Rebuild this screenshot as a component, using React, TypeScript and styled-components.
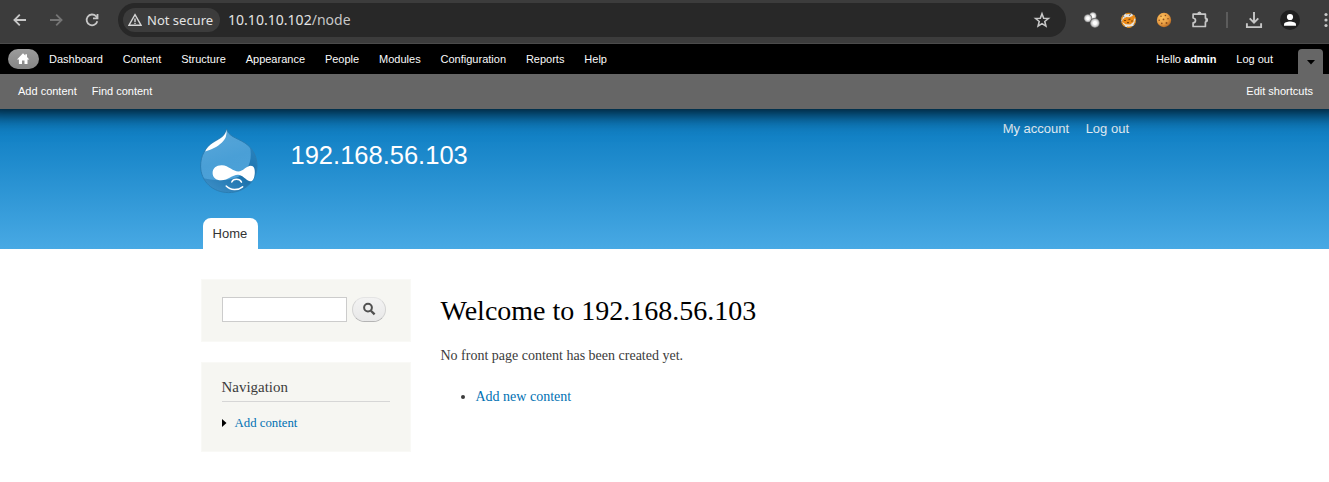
import React from "react";
import styled, { createGlobalStyle } from "styled-components";

const Global = createGlobalStyle`
  * { box-sizing: border-box; }
  html, body { margin: 0; padding: 0; background: #fff; overflow: hidden; }
  a { text-decoration: none; color: inherit; }
`;

const sans = `"Liberation Sans", Arial, sans-serif`;
const serif = `"Liberation Serif", "Times New Roman", serif`;

const Page = styled.div`
  width: 1329px;
  height: 482px;
  overflow: hidden;
`;

const BrowserBar = styled.div`
  position: relative;
  z-index: 2;
  height: 44px;
  padding: 0 0 4px 10px;
  display: flex;
  align-items: center;
  background: #3c3c3c;
  border-bottom: 1px solid #4b4b4b;
  font-family: "Noto Sans", sans-serif;
`;

const NavButtons = styled.div`
  display: flex;
  gap: 16px;
  width: 108px;
  flex: none;
  svg { display: block; }
`;

const AddressBar = styled.div`
  width: 948px;
  height: 34px;
  flex: none;
  margin-top: 1px;
  padding: 0 14px 0 5px;
  display: flex;
  align-items: center;
  border-radius: 17px;
  background: #282828;
`;

const SecurityChip = styled.div`
  width: 97px;
  height: 24px;
  padding-left: 5px;
  display: flex;
  align-items: center;
  gap: 5px;
  border-radius: 12px;
  background: #3c3c3c;
  color: #e3e3e3;
  font-size: 13px;
  line-height: 24px;
  white-space: nowrap;
`;

const Url = styled.div`
  flex: 1;
  margin-left: 8px;
  color: #e3e3e3;
  font-size: 14px;
  letter-spacing: 0.03px;
  line-height: 24px;
  span { color: #c7c7c7; }
`;

const Extensions = styled.div`
  display: flex;
  align-items: center;
  margin-left: 16px;
  flex: none;
  svg { display: block; flex: none; }
`;

const Slot = styled.div<{ $w: number }>`
  width: ${(p) => p.$w}px;
  height: 20px;
  flex: none;
  display: flex;
  align-items: center;
  justify-content: center;
`;

const Separator = styled.div`
  width: 2px;
  height: 16px;
  background: #5c5c5c;
`;

/* Bleeds past both window edges so that its shadow stays even across the page. */
const Toolbar = styled.div`
  position: relative;
  z-index: 1;
  margin: 0 -20px;
  box-shadow: 0 3px 20px #000;
  font: 11px/20px ${sans};
`;

const AdminMenu = styled.div`
  height: 30px;
  padding: 5px 26px 0 28px;
  display: flex;
  background: #000;
  color: #fafafa;
`;

const HomeLink = styled.a`
  width: 31px;
  height: 20px;
  display: flex;
  align-items: center;
  justify-content: center;
  border-radius: 10px;
  background: linear-gradient(#9c9c9c, #858585);
`;

const MenuItem = styled.a`
  padding: 0 9.96px;
`;

const Spacer = styled.div`
  flex: 1;
`;

const DrawerToggle = styled.a`
  width: 25px;
  height: 25px;
  margin-left: 15px;
  padding-top: 1px;
  display: flex;
  align-items: center;
  justify-content: center;
  border-radius: 4px 4px 0 0;
  background: #666;
`;

const Shortcuts = styled.div`
  height: 35px;
  padding: 7px 36px 0 38px;
  display: flex;
  gap: 15px;
  background: #666;
  color: #fefefe;
`;

const Header = styled.header`
  height: 140px;
  background: linear-gradient(#0779bf, #48a9e4);
`;

const HeaderInner = styled.div`
  height: 140px;
  margin: 0 200px;
  display: flex;
  flex-direction: column;
  justify-content: space-between;
`;

const Branding = styled.div`
  display: flex;
  padding-top: 12px;
`;

const Logo = styled.svg`
  margin-top: 7px;
  display: block;
`;

const SiteName = styled.div`
  flex: 1;
  margin: 19px 0 0 32.5px;
  color: #fffeff;
  font: 25.5px/30px ${sans};
`;

const UserMenu = styled.nav`
  display: flex;
  gap: 16.5px;
  color: #e6f1f8;
  font: 13px/16px ${sans};
`;

const HomeTab = styled.a`
  width: 55px;
  height: 31px;
  margin-left: 3px;
  padding-left: 9.6px;
  border-radius: 8px 8px 0 0;
  background: #fff;
  color: #333;
  font: 13px/32px ${sans};
`;

const Body = styled.div`
  display: flex;
  padding: 30px 0 0 200.5px;
  gap: 30px;
  font-family: ${serif};
`;

const Sidebar = styled.aside`
  width: 210px;
  display: flex;
  flex-direction: column;
  gap: 20px;
`;

const Block = styled.section<{ $h: number }>`
  height: ${(p) => p.$h}px;
  padding: 17px 20px 0;
  background: #f6f6f2;
  border: 1px solid #f9f9f6;
`;

const SearchRow = styled.div`
  display: flex;
  gap: 5px;
`;

const SearchField = styled.input`
  width: 125px;
  height: 25px;
  padding: 4px;
  border: 1px solid #ccc;
  border-radius: 0;
  background: #fff;
  outline: none;
`;

const SearchButton = styled.button`
  width: 34px;
  height: 25px;
  padding: 0 0 1px;
  display: flex;
  align-items: center;
  justify-content: center;
  border: 1px solid #e4e4e4;
  border-bottom-color: #b4b4b4;
  border-left-color: #d2d2d2;
  border-right-color: #d2d2d2;
  border-radius: 13px;
  background: linear-gradient(#f3f3f3, #e8e8e8);
`;

const BlockTitle = styled.h2`
  margin: 0;
  height: 22px;
  border-bottom: 1px solid #d6d6d6;
  color: #3b3b3b;
  font-weight: normal;
  font-size: 14.95px;
  line-height: 15px;
`;

const NavLink = styled.a`
  display: flex;
  align-items: center;
  gap: 8px;
  margin-top: 13px;
  color: #0071b3;
  font-size: 12.8px;
  line-height: 16px;
`;

const Content = styled.main`
  padding-top: 15px;
  color: #3b3b3b;
  font-size: 14px;
`;

const Title = styled.h1`
  margin: 0;
  color: #000;
  font-weight: normal;
  font-size: 28px;
  line-height: 34px;
`;

const Message = styled.p`
  margin: 17px 0 0;
  line-height: 21px;
`;

const ActionList = styled.ul`
  margin: 20px 0 0;
  padding-left: 35px;
  line-height: 21px;
  a { color: #0071b3; }
`;

const menu = ["Dashboard", "Content", "Structure", "Appearance", "People", "Modules", "Configuration", "Reports", "Help"];

const BackIcon = ({ color, flip }: { color: string; flip?: boolean }) => (
  <svg width="20" height="20" viewBox="0 0 20 20" fill="none" stroke={color} strokeWidth="1.8">
    <path d={flip ? "M4 10H15M10.2 4.6 15.6 10 10.2 15.4" : "M16 10H5M9.8 4.6 4.4 10 9.8 15.4"} />
  </svg>
);

const ReloadIcon = () => (
  <svg width="20" height="20" viewBox="0 0 20 20" fill="none" stroke="#c7c7c7" strokeWidth="1.8">
    <path d="M15.3 11.2A5.4 5.4 0 1 1 14 6.2L15.2 7.6" />
    <path d="M15.5 4v4.4H11" />
  </svg>
);

const WarningIcon = () => (
  <svg width="14" height="14" viewBox="0 0 14 14" fill="none" stroke="#d6d6d6" strokeWidth="1.4">
    <path d="M7 1.700 13 12.200H1Z" />
    <path d="M7 5.500V9M7 9.700V11" />
  </svg>
);

const StarIcon = () => (
  <svg width="20" height="20" viewBox="0 0 20 20" fill="none" stroke="#c7c7c7" strokeWidth="1.6">
    <path d="m10 3.800 1.700 4.400 4.700.3-3.600 3 1.100 4.600-3.900-2.500-3.900 2.500 1.100-4.600-3.600-3 4.700-.3Z" />
  </svg>
);

const BubblesIcon = () => (
  <svg width="20" height="20" viewBox="0 0 20 20">
    <defs>
      <radialGradient id="bubble">
        <stop offset="0.3" stopColor="#fff" />
        <stop offset="0.7" stopColor="#c9c9c9" />
        <stop offset="1" stopColor="#555" />
      </radialGradient>
    </defs>
    <circle cx="10.9" cy="5.800" r="3.900" fill="url(#bubble)" />
    <circle cx="5.900" cy="8.300" r="4.200" fill="url(#bubble)" />
    <circle cx="12.900" cy="13" r="5" fill="url(#bubble)" />
  </svg>
);

const FoxIcon = () => (
  <svg width="20" height="20" viewBox="0 0 20 20">
    <circle cx="10.500" cy="10.300" r="7.200" fill="#e6e4e0" />
    <circle cx="10.500" cy="10.300" r="7" fill="none" stroke="#d9820f" strokeWidth="1.200" strokeDasharray="5 2.500" />
    <path d="M4.800 9.200 8.300 7 11.500 7.300 16.800 5 15.500 12 12.300 14.600 7.500 14.300 3.800 11.600Z" fill="#ec8a16" />
    <path d="M4.500 5.400 6.500 7M13 3.500 11 6" stroke="#777" strokeWidth="1" />
    <path d="M6 10.500h2M10.500 9.600 12.500 9M9 12.600h2M13.500 11.500 14.500 10.500" stroke="#7b430c" strokeWidth="1.200" />
  </svg>
);

const CookieIcon = () => (
  <svg width="20" height="20" viewBox="0 0 20 20">
    <defs>
      <radialGradient id="cookie" cx=".38" cy=".35" r=".68">
        <stop offset="0" stopColor="#ffc25e" />
        <stop offset="0.65" stopColor="#e79b41" />
        <stop offset="1" stopColor="#b86a22" />
      </radialGradient>
    </defs>
    <circle cx="10" cy="10" r="7.200" fill="url(#cookie)" />
    <g fill="#8a4d1c">
      <circle cx="7" cy="6.200" r=".7" /><circle cx="11.400" cy="5.500" r=".8" />
      <circle cx="5.200" cy="10.300" r=".8" /><circle cx="9.500" cy="9.400" r=".9" />
      <circle cx="14" cy="8.800" r=".8" /><circle cx="7.800" cy="13.400" r=".8" />
      <circle cx="12.500" cy="13" r="1" />
    </g>
  </svg>
);

const PuzzleIcon = () => (
  <svg width="20" height="20" viewBox="0 0 20 20">
    <path
      d="M3.100 4.200H15.400V8.200C17.300 8.400 17.300 11.800 15.400 12V16.500H3.100V12.900C6.300 12.400 6.300 8.500 3.100 8Z"
      fill="none" stroke="#c7c7c7" strokeWidth="1.700" strokeLinejoin="round"
    />
    <path d="M7.200 4.200a2.200 2.600 0 0 1 4.400 0ZM15.400 7.800a2.500 2.200 0 0 1 0 4.600Z" fill="#c7c7c7" />
  </svg>
);

const DownloadIcon = () => (
  <svg width="20" height="20" viewBox="0 0 20 20" fill="none" stroke="#c7c7c7" strokeWidth="1.900">
    <path d="M10 2V12.600M5.700 8.400 10 12.700 14.300 8.400M2.900 13.200V17.100H17.100V13.200" />
  </svg>
);

const ProfileIcon = () => (
  <svg width="20" height="20" viewBox="0 0 20 20">
    <circle cx="10" cy="10" r="10" fill="#1f1f1f" />
    <circle cx="10" cy="7" r="3.100" fill="#fff" />
    <path d="M4 15.700V14.400C4 12.400 7.500 11.500 10 11.500S16 12.400 16 14.400V15.700Z" fill="#fff" />
  </svg>
);

const MoreIcon = () => (
  <svg width="6" height="20" viewBox="0 0 6 20" fill="#c7c7c7">
    <circle cx="3" cy="4.500" r="1.600" /><circle cx="3" cy="10" r="1.600" /><circle cx="3" cy="15.500" r="1.600" />
  </svg>
);

const HouseIcon = () => (
  <svg width="13" height="12" viewBox="0 0 13 12" fill="#fff">
    <path d="M6 .3 0 6.500H1.900V11H5V7.600H7.500V11H10.500V6.500H12.300L10 4.100V1.200H8.300V2.500Z" />
  </svg>
);

const SearchIcon = () => (
  <svg width="14" height="14" viewBox="0 0 14 14" fill="none" stroke="#505050">
    <circle cx="6" cy="5.600" r="3.900" strokeWidth="2" />
    <path d="M8.900 8.700 12.600 12.400" strokeWidth="2.300" />
  </svg>
);

const dropOutline =
  "M26.700 .8C28.500 8.500 36 9.500 45 15C53 20.500 57 28.500 57 38C57 53 44.500 64.600 28.700 64.600C13 64.600 .6 53.500 .6 38C.6 28 5 19.500 14 13.500C20 9.800 25 8 26.700 .8Z";

const DropletLogo = () => (
  <Logo width="58" height="66" viewBox="0 0 58 66">
    <defs>
      <linearGradient id="drop" x1="0.200" y1="0" x2="0.500" y2="1">
        <stop offset="0" stopColor="#5ba8da" />
        <stop offset="0.500" stopColor="#4a9fd6" />
        <stop offset="1" stopColor="#4ea3da" />
      </linearGradient>
      <linearGradient id="dropShade" x1="1" y1="0" x2="0.200" y2="1">
        <stop offset="0" stopColor="#2a84c0" />
        <stop offset="0.500" stopColor="#1b71ab" />
        <stop offset="1" stopColor="#3e90c8" />
      </linearGradient>
      <clipPath id="dropShape"><path d={dropOutline} /></clipPath>
    </defs>
    <g clipPath="url(#dropShape)">
      <path d="M0 0H58V66H0Z" fill="url(#drop)" />
      <path d="M50 19C53 34 47 44 38 49C25 54 12 52 2 50C8 64 20 68 34 66C52 63 60 50 58 36C57 28 54 23 50 19Z" fill="url(#dropShade)" />
    </g>
    <path d={dropOutline} fill="none" stroke="#287bb0" strokeWidth=".9" />
    <path d="M26.600 1.500C25.500 8 20.500 10.800 14.500 14C9.500 17 6 20.500 5.200 23.600C8 22.500 11 21.800 14.500 19.800C20 17 24.500 12.500 25.800 9C26.500 6.500 26.800 4 26.600 1.500Z" fill="#fff" />
    <path d="M12.600 45C12.600 40 16.500 37 22 37.200C28.500 37.500 33.500 43.500 38.300 43.500C43 43.500 46.500 37.800 50.800 37.800C54 37.800 55 41 54.800 45C54.500 50 52.800 53.800 50 53.300C46 52.500 42.500 46.800 38 46.800C32 47 28.500 52.300 21 52.300C16 52.300 12.600 49.500 12.600 45Z" fill="#fff" />
    <path d="M31.800 54C33.200 50.600 39.500 50.300 41.500 54.200M26.200 58C30.500 62.500 38 62.500 42.600 58.800" fill="none" stroke="#fff" strokeWidth="1.500" strokeLinecap="round" />
  </Logo>
);

export default function App() {
  return (
    <Page>
      <Global />
      <BrowserBar>
        <NavButtons>
          <BackIcon color="#c7c7c7" />
          <BackIcon color="#757575" flip />
          <ReloadIcon />
        </NavButtons>
        <AddressBar>
          <SecurityChip><WarningIcon />Not secure</SecurityChip>
          <Url>10.10.10.102<span>/node</span></Url>
          <StarIcon />
        </AddressBar>
        <Extensions>
          <Slot $w={20}><BubblesIcon /></Slot>
          <Slot $w={52}><FoxIcon /></Slot>
          <Slot $w={20}><CookieIcon /></Slot>
          <Slot $w={52}><PuzzleIcon /></Slot>
          <Separator />
          <Slot $w={52}><DownloadIcon /></Slot>
          <Slot $w={20}><ProfileIcon /></Slot>
          <Slot $w={52}><MoreIcon /></Slot>
        </Extensions>
      </BrowserBar>

      <Toolbar>
        <AdminMenu>
          <HomeLink href="#"><HouseIcon /></HomeLink>
          {menu.map((m) => <MenuItem key={m} href="#">{m}</MenuItem>)}
          <Spacer />
          <MenuItem href="#">Hello <b>admin</b></MenuItem>
          <MenuItem href="#">Log out</MenuItem>
          <DrawerToggle href="#">
            <svg width="8" height="5" viewBox="0 0 8 5"><path d="M0 0H8L4 4.500Z" /></svg>
          </DrawerToggle>
        </AdminMenu>
        <Shortcuts>
          <a href="#">Add content</a>
          <a href="#">Find content</a>
          <Spacer />
          <a href="#">Edit shortcuts</a>
        </Shortcuts>
      </Toolbar>

      <Header>
        <HeaderInner>
          <Branding>
            <DropletLogo />
            <SiteName>192.168.56.103</SiteName>
            <UserMenu>
              <a href="#">My account</a>
              <a href="#">Log out</a>
            </UserMenu>
          </Branding>
          <HomeTab href="#">Home</HomeTab>
        </HeaderInner>
      </Header>

      <Body>
        <Sidebar>
          <Block $h={63}>
            <SearchRow>
              <SearchField aria-label="Search" />
              <SearchButton aria-label="Search"><SearchIcon /></SearchButton>
            </SearchRow>
          </Block>
          <Block $h={90}>
            <BlockTitle>Navigation</BlockTitle>
            <NavLink href="#">
              <svg width="5" height="8" viewBox="0 0 5 8"><path d="M0 0 4.500 4 0 8Z" fill="#000" /></svg>
              Add content
            </NavLink>
          </Block>
        </Sidebar>
        <Content>
          <Title>Welcome to 192.168.56.103</Title>
          <Message>No front page content has been created yet.</Message>
          <ActionList>
            <li><a href="#">Add new content</a></li>
          </ActionList>
        </Content>
      </Body>
    </Page>
  );
}
